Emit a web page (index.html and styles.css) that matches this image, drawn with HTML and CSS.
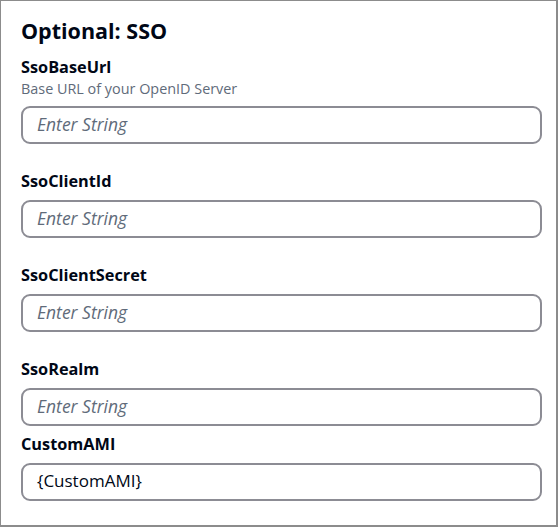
FILE: index.html
```html
<!DOCTYPE html>
<html>
<head>
<meta charset="utf-8">
<link rel="stylesheet" href="styles.css">
</head>
<body>
<div class="panel">
  <h2 class="title">Optional: SSO</h2>
  <div class="field spaced">
    <div class="label">SsoBaseUrl</div>
    <div class="desc">Base URL of your OpenID Server</div>
    <div class="input placeholder">Enter String</div>
  </div>
  <div class="field spaced">
    <div class="label">SsoClientId</div>
    <div class="input placeholder">Enter String</div>
  </div>
  <div class="field spaced">
    <div class="label">SsoClientSecret</div>
    <div class="input placeholder">Enter String</div>
  </div>
  <div class="field close">
    <div class="label">SsoRealm</div>
    <div class="input placeholder">Enter String</div>
  </div>
  <div class="field">
    <div class="label">CustomAMI</div>
    <div class="input value">{CustomAMI}</div>
  </div>
</div>
</body>
</html>
```
FILE: styles.css
```css
html, body {
  margin: 0;
  padding: 0;
  background: #ffffff;
}
body {
  font-family: "Open Sans", "Noto Sans", sans-serif;
  color: #000716;
}
.panel {
  width: 558px;
  height: 527px;
  box-sizing: border-box;
  border: 1px solid #8c8c8c;
  border-right-width: 2px;
  border-bottom-width: 2px;
  padding: 15px 14px 0 20px;
  display: flex;
  flex-direction: column;
}
.title {
  margin: 0 0 10px 0;
  font-size: 21.5px;
  line-height: 30px;
  font-weight: 700;
}
.field {
  display: flex;
  flex-direction: column;
}
.field.spaced {
  margin-bottom: 26px;
}
.field.close {
  margin-bottom: 7px;
}
.label {
  font-size: 16.3px;
  line-height: 22px;
  font-weight: 700;
  margin-bottom: 8px;
}
.desc {
  font-size: 14.4px;
  line-height: 20px;
  color: #5f6b7a;
  margin-top: -7px;
  margin-bottom: 7px;
}
.input {
  height: 38px;
  box-sizing: border-box;
  border: 2px solid #8c8c94;
  border-radius: 9px;
  padding: 0 14px 3px 14px;
  display: flex;
  align-items: center;
  font-size: 17px;
}
.placeholder {
  font-style: italic;
  font-size: 17.5px;
  color: #5f6b7a;
}
.value {
  color: #000716;
}
```
